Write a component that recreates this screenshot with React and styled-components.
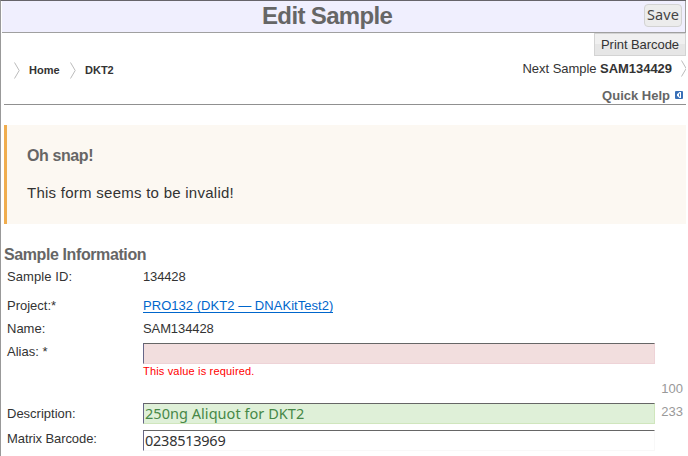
import React from "react";
import styled, { createGlobalStyle } from "styled-components";

const Global = createGlobalStyle`
  * { box-sizing: border-box; }
  body { margin: 0; background: #fff; color: #333; font: 13px "Liberation Sans", Arial, sans-serif; }
`;

const Page = styled.main`
  width: 686px;
  height: 456px;
  overflow: hidden;
  border-top: 1px solid #66646a;
  border-left: 1px solid #999;
`;

const TitleBar = styled.header`
  display: grid;
  grid-template-columns: 260px auto 1fr;
  height: 32px;
  margin-left: 1px;
  background: #f0effe;
  border-bottom: 1px solid #a0a0a0;
  border-right: 1px solid #a0a0a0;
`;

const Title = styled.h1`
  grid-column: 2;
  margin: 0;
  font-size: 24px;
  line-height: 30px;
  letter-spacing: -0.64px;
  color: #666;
`;

const SaveButton = styled.button`
  justify-self: end;
  width: 38px;
  height: 23px;
  margin: 3px 3px 0 0;
  padding: 0 0 2px;
  border: 1px solid #d3d3d3;
  border-radius: 4px;
  background: #ececec;
  color: #444;
  font: 14.5px/19px "Noto Sans", sans-serif;
  letter-spacing: 0.1px;
`;

const Toolbar = styled.nav`
  display: flex;
  justify-content: space-between;
  height: 72px;
  margin-left: 3px;
  border-bottom: 1px solid #909090;
`;

const Crumbs = styled.div`
  display: flex;
  align-items: center;
  height: 16px;
  margin: 29px 0 0 10px;
  font-size: 11px;
  font-weight: bold;
  span { width: 41px; margin-left: 9px; }
`;

const Actions = styled.div`
  display: flex;
  flex-direction: column;
  align-items: flex-end;
`;

const PrintButton = styled.button`
  width: 92px;
  height: 23px;
  padding: 0;
  border: 1px solid #d3d3d3;
  background: linear-gradient(#f0f0f0 0 50%, #e6e6e6 50% 100%);
  color: #333;
  font: 13px/21px "Liberation Sans", Arial, sans-serif;
  letter-spacing: -0.06px;
`;

const NextSample = styled.div`
  display: flex;
  align-items: center;
  gap: 9px;
  height: 16px;
  margin-top: 4px;
  letter-spacing: -0.04px;
`;

const QuickHelp = styled.div`
  display: flex;
  align-items: center;
  gap: 5px;
  height: 16px;
  margin: 11px 3px 0 0;
  font-weight: bold;
  color: #666;
`;

const Alert = styled.section`
  height: 99px;
  margin: 20px 0 0 3px;
  padding: 21px 20px;
  border-left: 3px solid #f0ad4e;
  background: #fcf8f2;
`;

const AlertTitle = styled.h4`
  margin: 0;
  font-size: 16px;
  line-height: 20px;
  letter-spacing: -0.4px;
  color: #666;
`;

const AlertText = styled.p`
  margin: 17px 0 0;
  font-size: 15px;
  line-height: 20px;
  letter-spacing: 0.26px;
`;

const SectionTitle = styled.h2`
  margin: 21px 0 0 3px;
  font-size: 16px;
  line-height: 20px;
  letter-spacing: -0.4px;
  color: #666;
`;

const Row = styled.div`
  display: grid;
  grid-template-columns: 136px 512px 1fr;
  height: ${(p) => p.$height}px;
  margin-left: 6px;
  padding-top: ${(p) => p.$pad || 0}px;
`;

const Cell = styled.div`
  line-height: 16px;
  margin-top: ${(p) => p.$top || 0}px;
  letter-spacing: ${(p) => p.$spacing || 0}px;
`;

const Link = styled.a`
  display: inline-block;
  height: 15px;
  line-height: 16px;
  border-bottom: 1px solid #0066cc;
  color: #0066cc;
  letter-spacing: 0.04px;
`;

const tones = {
  error: ["#f2dede", "#eed3d7", "#333"],
  success: ["#dff0d8", "#d0e6bd", "#468847"],
  plain: ["#fff", "#f8f8f8", "#333"],
};

const Input = styled.input`
  display: block;
  width: 512px;
  height: 21px;
  margin: 0;
  padding: 0 1px 1px;
  border: 1px solid ${(p) => tones[p.$tone][1]};
  border-top-color: #666;
  border-left-color: #666688;
  outline: 0;
  background: ${(p) => tones[p.$tone][0]};
  color: ${(p) => tones[p.$tone][2]};
  font: 14.5px/18px "Noto Sans", sans-serif;
  letter-spacing: ${(p) => p.$spacing || 0}px;
`;

const ErrorText = styled.div`
  font-size: 11px;
  line-height: 14px;
  letter-spacing: 0.17px;
  color: #f00;
`;

const Counter = styled.div`
  justify-self: end;
  padding-right: 3px;
  line-height: 16px;
  margin-top: ${(p) => p.$top}px;
  color: #999;
`;

const Chevron = ({ width = 6 }) => (
  <svg width={width} height="17" viewBox={`0 0 ${width} 17`} fill="none" stroke="#bbb">
    <path d="M.5 .5 5.2 8.5 .5 16.5" />
  </svg>
);

const HelpIcon = () => (
  <svg width="8" height="8" viewBox="0 0 8 8">
    <rect width="8" height="8" rx="1" fill="#3970b7" />
    <path d="M4.5 1H6V7H4.5L2 4.8V3.2Z" fill="#fff" />
    <path d="M4.5 2.5V5.5" stroke="#3970b7" />
  </svg>
);

export default function App() {
  return (
    <Page>
      <Global />
      <TitleBar>
        <Title>Edit Sample</Title>
        <SaveButton>Save</SaveButton>
      </TitleBar>
      <Toolbar>
        <Crumbs>
          <Chevron /><span>Home</span>
          <Chevron /><span>DKT2</span>
        </Crumbs>
        <Actions>
          <PrintButton>Print Barcode</PrintButton>
          <NextSample>
            <div>Next Sample <b>SAM134429</b></div>
            <Chevron width={5} />
          </NextSample>
          <QuickHelp>Quick Help <HelpIcon /></QuickHelp>
        </Actions>
      </Toolbar>
      <Alert>
        <AlertTitle>Oh snap!</AlertTitle>
        <AlertText>This form seems to be invalid!</AlertText>
      </Alert>
      <SectionTitle>Sample Information</SectionTitle>
      <Row $height={32} $pad={4}><Cell $spacing={0.08}>Sample ID:</Cell><Cell $spacing={-0.15}>134428</Cell></Row>
      <Row $height={23} $pad={1}><Cell>Project:*</Cell><Cell><Link>PRO132 (DKT2 — DNAKitTest2)</Link></Cell></Row>
      <Row $height={23} $pad={1}><Cell>Name:</Cell><Cell $spacing={-0.1}>SAM134428</Cell></Row>
      <Row $height={60}>
        <Cell $top={1}>Alias: *</Cell>
        <div>
          <Input $tone="error" aria-label="Alias" />
          <ErrorText>This value is required.</ErrorText>
        </div>
        <Counter $top={38}>100</Counter>
      </Row>
      <Row $height={27}>
        <Cell $top={3}>Description:</Cell>
        <Input $tone="success" $spacing={0.04} aria-label="Description" defaultValue="250ng Aliquot for DKT2" />
        <Counter $top={1}>233</Counter>
      </Row>
      <Row $height={26}>
        <Cell $top={1} $spacing={-0.08}>Matrix Barcode:</Cell>
        <Input $tone="plain" $spacing={-0.25} aria-label="Matrix Barcode" defaultValue="0238513969" />
      </Row>
    </Page>
  );
}
